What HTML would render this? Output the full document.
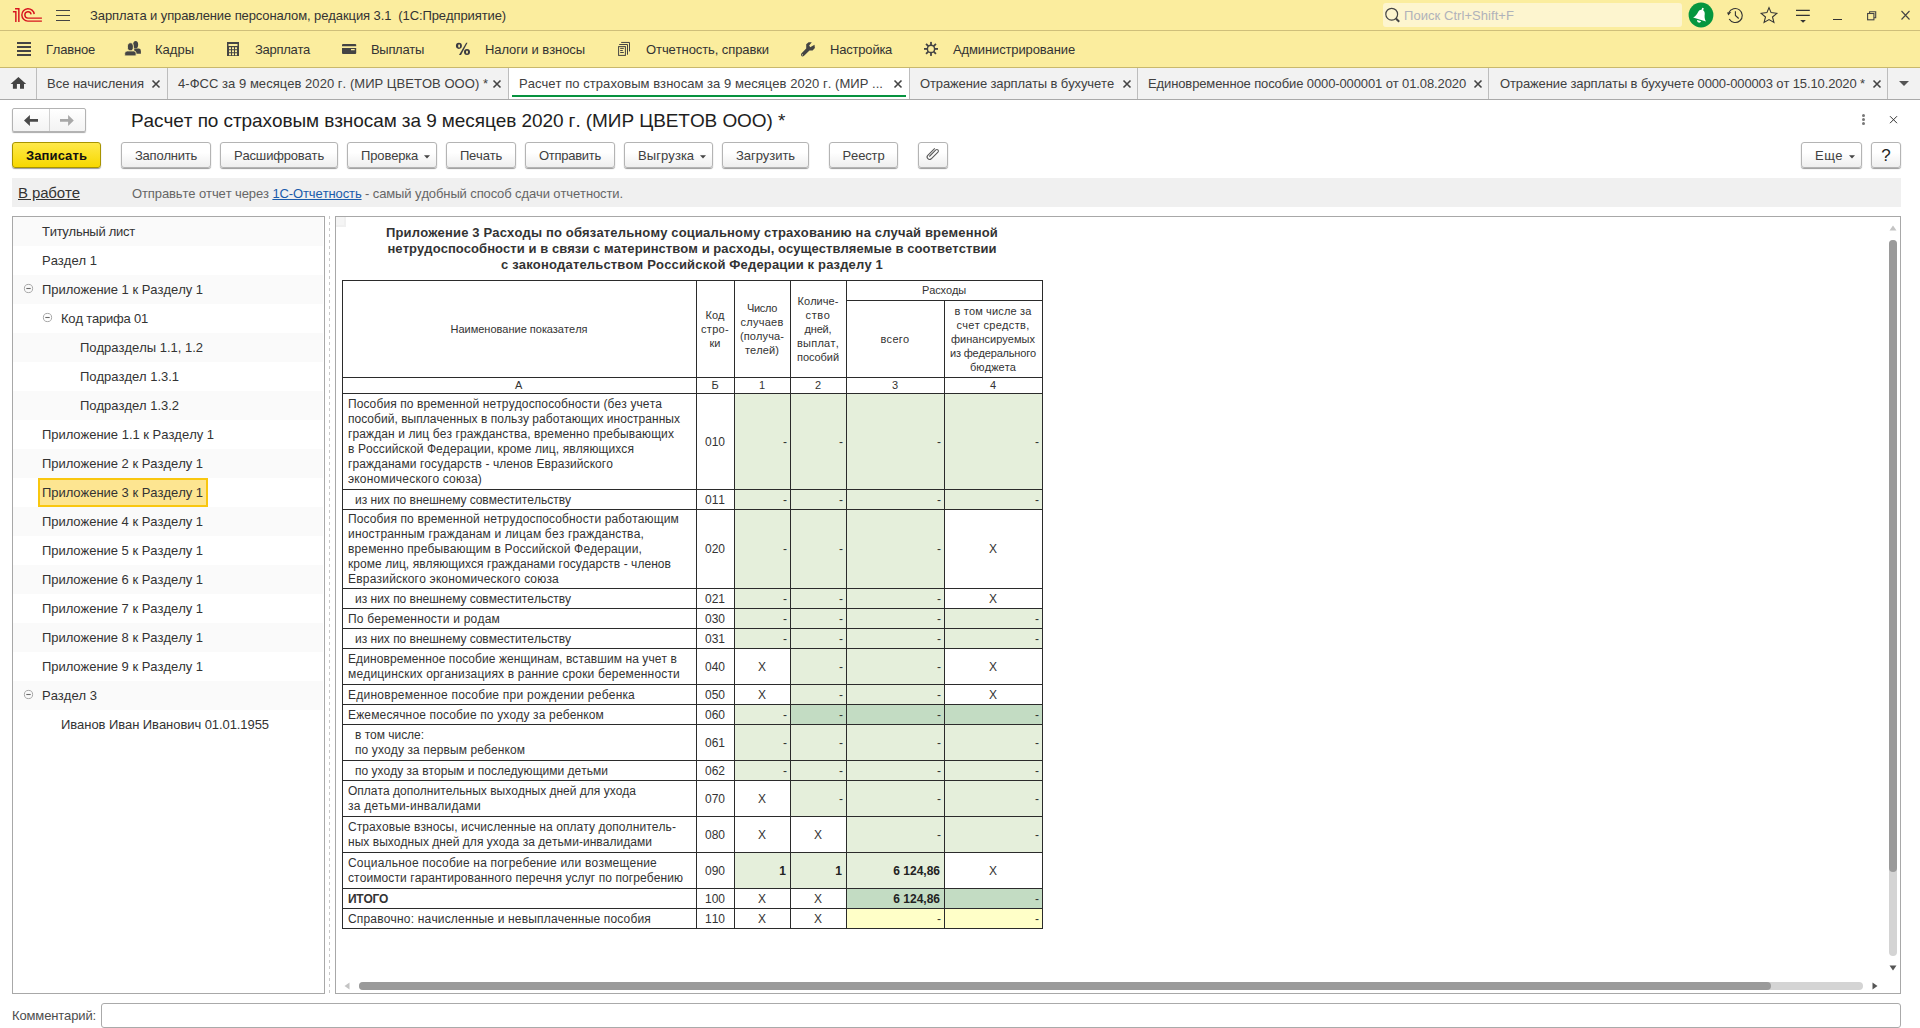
<!DOCTYPE html><html><head><meta charset="utf-8"><title>1C</title><style>
*{margin:0;padding:0;box-sizing:border-box}
html,body{width:1920px;height:1028px;overflow:hidden;background:#fff;font-family:"Liberation Sans",sans-serif;color:#333;font-kerning:none}
.a{position:absolute}
.t{position:absolute;white-space:nowrap;line-height:1}
.btn{position:absolute;height:26px;border:1px solid #b4b4b4;border-radius:3px;background:linear-gradient(#fff 0%,#fff 40%,#eeeeee 100%);box-shadow:0 1px 1px #9a9a9a;font-size:13px;color:#404040;text-align:center;line-height:24px;padding-top:1px;white-space:nowrap}
.tab{position:absolute;top:68px;height:32px;font-size:13px;color:#404040;line-height:32px;white-space:nowrap}
.sec{position:absolute;top:42px;font-size:13px;color:#333;white-space:nowrap;line-height:16px}
.tr{position:absolute;left:13px;width:310px;height:29px;font-size:13px;color:#333;line-height:29px;white-space:nowrap}
.tr.g{background:#fafafa}
.c{position:absolute;overflow:hidden}
.ln{position:absolute;background:#2b2b2b}
</style></head><body>
<div class="a" style="left:0;top:0;width:1920px;height:67px;background:#fbed9e"></div>
<div class="a" style="left:0;top:30px;width:1920px;height:1px;background:#cfbf7a"></div>
<svg class="a" style="left:8px;top:4px" width="40" height="22" viewBox="0 0 40 22" fill="none" stroke="#d7141f" stroke-width="1.45">
<path d="M4.9 7.75 H7.85 V17.9"/><path d="M7.05 4.7 H10.85 V17.9"/>
<path d="M26.2 10.2 A6.2 6.2 0 1 0 19.9 17.1 H33.9"/><path d="M23.1 10.4 A3.15 3.15 0 1 0 19.9 14.1 H33.9"/>
</svg>
<div class="a" style="left:56px;top:10px;width:14px;height:1px;background:#444"></div>
<div class="a" style="left:56px;top:15px;width:14px;height:1px;background:#444"></div>
<div class="a" style="left:56px;top:20px;width:14px;height:1px;background:#444"></div>
<div class="t" style="left:90px;top:9px;font-size:13px;color:#333"><span style="letter-spacing:-0.099px">Зарплата и управление персоналом, редакция 3.1&nbsp; (1С:Предприятие)</span></div>
<div class="a" style="left:1383px;top:3px;width:299px;height:24px;background:#fdf5cf;border-radius:3px"></div>
<svg class="a" style="left:1383px;top:5px" width="20" height="20" viewBox="0 0 20 20" fill="none" stroke="#444" stroke-width="1.2"><circle cx="8.7" cy="9.2" r="5.9"/><path d="M12.9 13.5 L16.2 16.8" stroke-width="2"/></svg>
<div class="t" style="left:1404px;top:9px;font-size:13px;color:#b0b2ba"><span style="letter-spacing:0.056px">Поиск Ctrl+Shift+F</span></div>
<svg class="a" style="left:1688px;top:2px" width="26" height="26" viewBox="0 0 26 26"><circle cx="13" cy="13" r="12.4" fill="#05963f"/>
<g transform="rotate(17 13 13)" fill="#fff"><path d="M6.2 17.7 C8.3 15.8 9 13.2 9.4 11 C9.8 8.9 11 7.8 12.8 7.8 C14.6 7.8 15.9 8.9 16.3 11 C16.7 13.2 17.4 15.8 19.6 17.7 Z"/><rect x="12" y="5.6" width="1.7" height="3"/><path d="M10.8 19 H15 C15 20.2 14 21 12.9 21 C11.8 21 10.8 20.2 10.8 19 Z"/></g></svg>
<svg class="a" style="left:1725px;top:5px" width="20" height="20" viewBox="0 0 20 20" fill="none" stroke="#333" stroke-width="1.1"><path d="M3.9 7.6 A7 7 0 1 1 4.2 14"/><path d="M2 7.6 L6.3 7.1 L3.4 10.4 Z" fill="#333" stroke="none"/><path d="M10.4 6.2 V10.4 L13.7 13.5"/></svg>
<svg class="a" style="left:1759px;top:5px" width="20" height="20" viewBox="0 0 20 20" fill="none" stroke="#333" stroke-width="1.1" stroke-linejoin="miter"><path d="M10 2.6 L12.1 7.6 L17.8 8.3 L13.5 12 L14.9 17.4 L10 14.6 L5.1 17.4 L6.5 12 L2.2 8.3 L7.9 7.6 Z"/></svg>
<svg class="a" style="left:1793px;top:5px" width="20" height="20" viewBox="0 0 20 20" fill="none" stroke="#333" stroke-width="1.2"><path d="M3 5.4 H16.8 M3 10.4 H16.8"/><path d="M7.2 15 H12.9 L10.05 17.8 Z" fill="#333" stroke="none"/></svg>
<div class="a" style="left:1833px;top:19px;width:9px;height:1px;background:#333"></div>
<svg class="a" style="left:1864px;top:8px" width="14" height="14" viewBox="0 0 14 14" fill="none" stroke="#444" stroke-width="1.1"><rect x="3.6" y="5.5" width="6.3" height="6.3"/><path d="M5.6 5.5 V3.7 H11.7 V9.8 H9.9"/></svg>
<svg class="a" style="left:1898px;top:8px" width="14" height="14" viewBox="0 0 14 14" fill="none" stroke="#444" stroke-width="1.1"><path d="M3.5 3 L11.5 11.5 M11.5 3 L3.5 11.5"/></svg>
<svg class="a" style="left:17px;top:42px" width="15" height="14" viewBox="0 0 15 14" fill="#444"><rect x="0" y="0" width="14" height="2"/><rect x="0" y="4" width="14" height="2"/><rect x="0" y="8" width="14" height="2"/><rect x="0" y="12" width="14" height="2"/></svg>
<div class="sec" style="left:46px"><span style="letter-spacing:-0.200px">Главное</span></div>
<svg class="a" style="left:124px;top:40px" width="18" height="18" viewBox="0 0 18 18" fill="#444"><ellipse cx="11.65" cy="4.7" rx="2.5" ry="3.65"/><path d="M10.2 8.6 H14.6 Q16.9 8.6 16.9 10.9 V13.8 H10.2 Z"/><g stroke="#fbed9e" stroke-width="0.9"><ellipse cx="6.4" cy="6.9" rx="3.0" ry="4.15"/><path d="M0.7 15.9 V13.2 Q0.7 10.9 3.2 10.9 H9.6 Q12.1 10.9 12.1 13.2 V15.9 Z"/></g></svg>
<div class="sec" style="left:155px"><span style="letter-spacing:0.008px">Кадры</span></div>
<svg class="a" style="left:227px;top:41px" width="13" height="16" viewBox="0 0 13 16" fill="#444"><path d="M0 1 H12 V15 H0 Z M1.5 3 V5 H10.5 V3 Z M2 6.2 V8.2 H4 V6.2 Z M5 6.2 V8.2 H7 V6.2 Z M8 6.2 V8.2 H10 V6.2 Z M2 9.2 V11.2 H4 V9.2 Z M5 9.2 V11.2 H7 V9.2 Z M8 9.2 V11.2 H10 V9.2 Z M2 12.2 V14.2 H4 V12.2 Z M5 12.2 V14.2 H7 V12.2 Z M8 12.2 V14.2 H10 V12.2 Z" fill-rule="evenodd"/></svg>
<div class="sec" style="left:255px"><span style="letter-spacing:-0.294px">Зарплата</span></div>
<svg class="a" style="left:342px;top:43px" width="15" height="12" viewBox="0 0 15 12" fill="#444"><path d="M0 1.8 Q0 1 1 1 H13.2 Q14.2 1 14.2 1.8 V3.2 H0 Z"/><path d="M0 5 H14.2 V10 Q14.2 10.9 13.2 10.9 H1 Q0 10.9 0 10 Z M9 6 V7.2 H12.7 V6 Z" fill-rule="evenodd"/></svg>
<div class="sec" style="left:371px"><span style="letter-spacing:-0.310px">Выплаты</span></div>
<svg class="a" style="left:454px;top:41px" width="18" height="16" viewBox="0 0 18 16" fill="#3a3a42"><path fill-rule="evenodd" d="M1.90 4.85 A3 3.05 0 1 0 7.90 4.85 A3 3.05 0 1 0 1.90 4.85 Z M4.15 5.00 A0.95 1.75 0 1 0 6.05 5.00 A0.95 1.75 0 1 0 4.15 5.00 Z M10.00 11.00 A3 3 0 1 0 16.00 11.00 A3 3 0 1 0 10.00 11.00 Z M12.00 11.05 A1.0 1.65 0 1 0 14.00 11.05 A1.0 1.65 0 1 0 12.00 11.05 Z"/><path d="M12.2 1.8 L13.5 1.8 L7.0 14.1 L5.0 14.1 Z"/></svg>
<div class="sec" style="left:485px"><span style="letter-spacing:-0.069px">Налоги и взносы</span></div>
<svg class="a" style="left:617px;top:41px" width="14" height="16" viewBox="0 0 14 16" fill="none" stroke="#444" stroke-width="1"><rect x="1.6" y="5.6" width="6.8" height="8.8"/><path d="M2.2 3.5 H10.5 V13.7"/><path d="M4.2 1.45 H12.5 V10.4"/><path d="M3.2 7.4 H6.8 M3.2 9.5 H5.8 M3.2 11.5 H6.8"/></svg>
<div class="sec" style="left:646px"><span style="letter-spacing:-0.091px">Отчетность, справки</span></div>
<svg class="a" style="left:800px;top:41px" width="16" height="16" viewBox="0 0 16 16" fill="#444"><path d="M6.2 3.2 L8.6 1.2 L11.8 1.2 L9.2 4.6 L10.2 6.2 L14.5 3.8 L14.9 7.0 L12.6 9.6 L9.5 9.6 L3.8 15.0 C3.0 15.8 1.6 15.6 1.2 14.6 C0.8 13.6 1.0 12.8 1.6 12.3 L6.2 7.6 Z"/><circle cx="2.4" cy="13.8" r="0.6" fill="#fbed9e"/></svg>
<div class="sec" style="left:830px"><span style="letter-spacing:-0.190px">Настройка</span></div>
<svg class="a" style="left:923px;top:41px" width="16" height="16" viewBox="0 0 16 16"><g fill="#444"><rect x="7.1" y="0.9" width="1.8" height="14"/><rect x="7.1" y="0.9" width="1.8" height="14" transform="rotate(45 8 7.9)"/><rect x="7.1" y="0.9" width="1.8" height="14" transform="rotate(90 8 7.9)"/><rect x="7.1" y="0.9" width="1.8" height="14" transform="rotate(135 8 7.9)"/></g><circle cx="8" cy="7.9" r="4.3" fill="#444"/><circle cx="8" cy="7.9" r="2.9" fill="#fbed9e"/></svg>
<div class="sec" style="left:953px"><span style="letter-spacing:-0.124px">Администрирование</span></div>
<div class="a" style="left:0;top:67px;width:1920px;height:33px;background:#f2f2f2"></div>
<div class="a" style="left:0;top:67px;width:1920px;height:1px;background:#c9b86c"></div>
<div class="a" style="left:0;top:99px;width:1920px;height:1px;background:#a9a9a9"></div>
<div class="a" style="left:509px;top:68px;width:400px;height:31px;background:#fff"></div>
<div class="a" style="left:512px;top:95px;width:394px;height:2px;background:#07923f"></div>
<div class="a" style="left:36px;top:68px;width:1px;height:31px;background:#bdbdbd"></div>
<div class="a" style="left:167px;top:68px;width:1px;height:31px;background:#bdbdbd"></div>
<div class="a" style="left:508px;top:68px;width:1px;height:31px;background:#bdbdbd"></div>
<div class="a" style="left:909px;top:68px;width:1px;height:31px;background:#bdbdbd"></div>
<div class="a" style="left:1137px;top:68px;width:1px;height:31px;background:#bdbdbd"></div>
<div class="a" style="left:1488px;top:68px;width:1px;height:31px;background:#bdbdbd"></div>
<div class="a" style="left:1887px;top:68px;width:1px;height:31px;background:#bdbdbd"></div>
<svg class="a" style="left:10px;top:76px" width="17" height="14" viewBox="0 0 17 14" fill="#444"><path d="M8.4 0.9 L16.2 7.9 H14 V12.8 H10 V7.9 H6.9 V12.8 H2.9 V7.9 H0.6 Z"/></svg>
<div class="tab" style="left:47px"><span style="letter-spacing:-0.018px">Все начисления</span></div>
<svg class="a" style="left:151px;top:79px" width="10" height="10" viewBox="0 0 10 10" stroke="#444" stroke-width="1.6"><path d="M1.5 1.5 L8.5 8.5 M8.5 1.5 L1.5 8.5"/></svg>
<div class="tab" style="left:178px"><span style="letter-spacing:0.038px">4-ФСС за 9 месяцев 2020 г. (МИР ЦВЕТОВ ООО) *</span></div>
<svg class="a" style="left:492px;top:79px" width="10" height="10" viewBox="0 0 10 10" stroke="#444" stroke-width="1.6"><path d="M1.5 1.5 L8.5 8.5 M8.5 1.5 L1.5 8.5"/></svg>
<div class="tab" style="left:519px"><span style="letter-spacing:0.044px">Расчет по страховым взносам за 9 месяцев 2020 г. (МИР ...</span></div>
<svg class="a" style="left:893px;top:79px" width="10" height="10" viewBox="0 0 10 10" stroke="#444" stroke-width="1.6"><path d="M1.5 1.5 L8.5 8.5 M8.5 1.5 L1.5 8.5"/></svg>
<div class="tab" style="left:920px"><span style="letter-spacing:-0.123px">Отражение зарплаты в бухучете</span></div>
<svg class="a" style="left:1122px;top:79px" width="10" height="10" viewBox="0 0 10 10" stroke="#444" stroke-width="1.6"><path d="M1.5 1.5 L8.5 8.5 M8.5 1.5 L1.5 8.5"/></svg>
<div class="tab" style="left:1148px"><span style="letter-spacing:-0.115px">Единовременное пособие 0000-000001 от 01.08.2020</span></div>
<svg class="a" style="left:1473px;top:79px" width="10" height="10" viewBox="0 0 10 10" stroke="#444" stroke-width="1.6"><path d="M1.5 1.5 L8.5 8.5 M8.5 1.5 L1.5 8.5"/></svg>
<div class="tab" style="left:1500px"><span style="letter-spacing:-0.122px">Отражение зарплаты в бухучете 0000-000003 от 15.10.2020 *</span></div>
<svg class="a" style="left:1872px;top:79px" width="10" height="10" viewBox="0 0 10 10" stroke="#444" stroke-width="1.6"><path d="M1.5 1.5 L8.5 8.5 M8.5 1.5 L1.5 8.5"/></svg>
<svg class="a" style="left:1898px;top:80px" width="12" height="8" viewBox="0 0 12 8" fill="#555"><path d="M1 1 H11 L6 6 Z"/></svg>
<div class="a" style="left:12px;top:108px;width:74px;height:24px;border:1px solid #b3b3b3;border-radius:2px;background:linear-gradient(#fff,#f3f3f3);box-shadow:0 1px 1px #aaa"></div>
<div class="a" style="left:49px;top:109px;width:1px;height:22px;background:#d0d0d0"></div>
<svg class="a" style="left:23px;top:114px" width="16" height="12" viewBox="0 0 16 12" fill="#4a4a4a"><path d="M1 6.4 L6.9 0.9 V5.1 H15 V7.7 H6.9 V11.9 Z"/></svg>
<svg class="a" style="left:59px;top:114px" width="16" height="12" viewBox="0 0 16 12" fill="#a8a8a8"><path d="M14.8 6.4 L9.1 0.9 V5.1 H1 V7.7 H9.1 V11.9 Z"/></svg>
<div class="t" style="left:131px;top:111px;font-size:19px;color:#1e1e1e;letter-spacing:-0.08px">Расчет по страховым взносам за 9 месяцев 2020 г. (МИР ЦВЕТОВ ООО) *</div>
<div class="a" style="left:1862px;top:114px;width:3px;height:3px;border-radius:2px;background:#777"></div>
<div class="a" style="left:1862px;top:118px;width:3px;height:3px;border-radius:2px;background:#777"></div>
<div class="a" style="left:1862px;top:122px;width:3px;height:3px;border-radius:2px;background:#777"></div>
<svg class="a" style="left:1888px;top:115px" width="10" height="10" viewBox="0 0 10 10" stroke="#333" stroke-width="1"><path d="M2 1.2 L9 8.2 M9 1.2 L2 8.2"/></svg>
<div class="a" style="left:12px;top:142px;width:89px;height:26px;border:1px solid #a89400;border-radius:3px;background:linear-gradient(#ffe94a,#f7d800);box-shadow:0 1px 1px #9a9a9a;font-size:13px;font-weight:bold;color:#111;text-align:center;line-height:24px;padding-top:1px"><span style="letter-spacing:0.120px">Записать</span></div>
<div class="btn" style="left:121px;top:142px;width:90px"><span style="letter-spacing:-0.234px">Заполнить</span></div>
<div class="btn" style="left:220px;top:142px;width:118px"><span style="letter-spacing:-0.176px">Расшифровать</span></div>
<div class="btn" style="left:347px;top:142px;width:90px;text-align:left;padding-left:13px"><span style="letter-spacing:-0.136px">Проверка</span></div>
<svg class="a" style="left:424px;top:155px" width="6" height="4" viewBox="0 0 6 4" fill="#444"><path d="M0 0.2 H6 L3 3.5 Z"/></svg>
<div class="btn" style="left:446px;top:142px;width:70px"><span style="letter-spacing:-0.217px">Печать</span></div>
<div class="btn" style="left:525px;top:142px;width:90px"><span style="letter-spacing:-0.273px">Отправить</span></div>
<div class="btn" style="left:624px;top:142px;width:89px;text-align:left;padding-left:13px"><span style="letter-spacing:0.079px">Выгрузка</span></div>
<svg class="a" style="left:700px;top:155px" width="6" height="4" viewBox="0 0 6 4" fill="#444"><path d="M0 0.2 H6 L3 3.5 Z"/></svg>
<div class="btn" style="left:722px;top:142px;width:87px"><span style="letter-spacing:-0.056px">Загрузить</span></div>
<div class="btn" style="left:829px;top:142px;width:69px"><span style="letter-spacing:-0.136px">Реестр</span></div>
<div class="btn" style="left:1801px;top:142px;width:61px;text-align:left;padding-left:13px"><span style="letter-spacing:0.468px">Еще</span></div>
<svg class="a" style="left:1849px;top:155px" width="6" height="4" viewBox="0 0 6 4" fill="#444"><path d="M0 0.2 H6 L3 3.5 Z"/></svg>
<div class="btn" style="left:918px;top:142px;width:30px"></div>
<svg class="a" style="left:924px;top:147px" width="17" height="17" viewBox="0 0 17 17" fill="none" stroke="#5a5a5a" stroke-width="1.1"><path d="M10.8 1.3 L3.77 8.32 A2.45 2.45 0 0 0 7.23 11.78 L13.96 5.06 A1.5 1.5 0 0 0 11.84 2.94 L5.3 9.5"/></svg>
<div class="btn" style="left:1871px;top:142px;width:30px;font-size:17px;color:#222">?</div>
<div class="a" style="left:12px;top:178px;width:1889px;height:29px;background:#f0f0f0"></div>
<div class="t" style="left:18px;top:185px;font-size:15px;color:#333;text-decoration:underline"><span style="letter-spacing:-0.125px">В работе</span></div>
<div class="t" style="left:132px;top:187px;font-size:13px;color:#666;letter-spacing:-0.111px">Отправьте отчет через <span style="color:#1a5bab;text-decoration:underline">1С-Отчетность</span> - самый удобный способ сдачи отчетности.</div>
<div class="a" style="left:12px;top:216px;width:313px;height:778px;border:1px solid #a8a8a8"></div>
<div class="tr g" style="top:217px"></div>
<div class="t" style="left:42px;top:225px;font-size:13px;color:#333"><span style="letter-spacing:-0.265px">Титульный лист</span></div>
<div class="tr" style="top:246px"></div>
<div class="t" style="left:42px;top:254px;font-size:13px;color:#333"><span style="letter-spacing:-0.013px">Раздел 1</span></div>
<div class="tr g" style="top:275px"></div>
<div class="t" style="left:42px;top:283px;font-size:13px;color:#333"><span style="letter-spacing:-0.025px">Приложение 1 к Разделу 1</span></div>
<svg class="a" style="left:23px;top:283px" width="11" height="11" viewBox="0 0 11 11" fill="none" stroke="#a6a6a6" stroke-width="1"><circle cx="5.5" cy="5.5" r="4.1"/><path d="M3.3 5.5 H7.7" stroke="#6a6a6a" stroke-width="1.1"/></svg>
<div class="tr" style="top:304px"></div>
<div class="t" style="left:61px;top:312px;font-size:13px;color:#333"><span style="letter-spacing:-0.206px">Код тарифа 01</span></div>
<svg class="a" style="left:42px;top:312px" width="11" height="11" viewBox="0 0 11 11" fill="none" stroke="#a6a6a6" stroke-width="1"><circle cx="5.5" cy="5.5" r="4.1"/><path d="M3.3 5.5 H7.7" stroke="#6a6a6a" stroke-width="1.1"/></svg>
<div class="tr g" style="top:333px"></div>
<div class="t" style="left:80px;top:341px;font-size:13px;color:#333"><span style="letter-spacing:-0.016px">Подразделы 1.1, 1.2</span></div>
<div class="tr" style="top:362px"></div>
<div class="t" style="left:80px;top:370px;font-size:13px;color:#333"><span style="letter-spacing:-0.034px">Подраздел 1.3.1</span></div>
<div class="tr g" style="top:391px"></div>
<div class="t" style="left:80px;top:399px;font-size:13px;color:#333"><span style="letter-spacing:-0.034px">Подраздел 1.3.2</span></div>
<div class="tr" style="top:420px"></div>
<div class="t" style="left:42px;top:428px;font-size:13px;color:#333"><span style="letter-spacing:-0.017px">Приложение 1.1 к Разделу 1</span></div>
<div class="tr g" style="top:449px"></div>
<div class="t" style="left:42px;top:457px;font-size:13px;color:#333"><span style="letter-spacing:-0.025px">Приложение 2 к Разделу 1</span></div>
<div class="tr" style="top:478px"></div>
<div class="a" style="left:38px;top:478px;width:170px;height:29px;background:#fde591;border:2px solid #f9c70f"></div>
<div class="t" style="left:42px;top:486px;font-size:13px;color:#333"><span style="letter-spacing:-0.025px">Приложение 3 к Разделу 1</span></div>
<div class="tr g" style="top:507px"></div>
<div class="t" style="left:42px;top:515px;font-size:13px;color:#333"><span style="letter-spacing:-0.025px">Приложение 4 к Разделу 1</span></div>
<div class="tr" style="top:536px"></div>
<div class="t" style="left:42px;top:544px;font-size:13px;color:#333"><span style="letter-spacing:-0.025px">Приложение 5 к Разделу 1</span></div>
<div class="tr g" style="top:565px"></div>
<div class="t" style="left:42px;top:573px;font-size:13px;color:#333"><span style="letter-spacing:-0.025px">Приложение 6 к Разделу 1</span></div>
<div class="tr" style="top:594px"></div>
<div class="t" style="left:42px;top:602px;font-size:13px;color:#333"><span style="letter-spacing:-0.025px">Приложение 7 к Разделу 1</span></div>
<div class="tr g" style="top:623px"></div>
<div class="t" style="left:42px;top:631px;font-size:13px;color:#333"><span style="letter-spacing:-0.025px">Приложение 8 к Разделу 1</span></div>
<div class="tr" style="top:652px"></div>
<div class="t" style="left:42px;top:660px;font-size:13px;color:#333"><span style="letter-spacing:-0.025px">Приложение 9 к Разделу 1</span></div>
<div class="tr g" style="top:681px"></div>
<div class="t" style="left:42px;top:689px;font-size:13px;color:#333"><span style="letter-spacing:-0.013px">Раздел 3</span></div>
<svg class="a" style="left:23px;top:689px" width="11" height="11" viewBox="0 0 11 11" fill="none" stroke="#a6a6a6" stroke-width="1"><circle cx="5.5" cy="5.5" r="4.1"/><path d="M3.3 5.5 H7.7" stroke="#6a6a6a" stroke-width="1.1"/></svg>
<div class="tr" style="top:710px"></div>
<div class="t" style="left:61px;top:718px;font-size:13px;color:#333"><span style="letter-spacing:-0.070px">Иванов Иван Иванович 01.01.1955</span></div>
<div class="a" style="left:329px;top:216px;width:1px;height:778px;background:repeating-linear-gradient(#c8c8c8 0 3px,transparent 3px 6px)"></div>
<div class="a" style="left:335px;top:216px;width:1566px;height:778px;border:1px solid #a8a8a8"></div>
<div class="a" style="left:336px;top:217px;width:10px;height:10px;background:#f5f5f5;border-right:2px solid #f0f0f0;border-bottom:2px solid #f0f0f0"></div>
<svg class="a" style="left:1889px;top:225px" width="8" height="6" viewBox="0 0 8 6" fill="#c4c4c4"><path d="M0.5 5.5 L4 0.5 L7.5 5.5 Z"/></svg>
<div class="a" style="left:1889px;top:240px;width:8px;height:716px;border-radius:4px;background:#d4d4d4"></div>
<div class="a" style="left:1889px;top:240px;width:8px;height:632px;border-radius:4px;background:#9a9a9a"></div>
<svg class="a" style="left:1889px;top:965px" width="8" height="6" viewBox="0 0 8 6" fill="#555"><path d="M0.5 0.5 L7.5 0.5 L4 5.5 Z"/></svg>
<svg class="a" style="left:344px;top:982px" width="6" height="8" viewBox="0 0 6 8" fill="#c4c4c4"><path d="M5.5 0.5 V7.5 L0.5 4 Z"/></svg>
<div class="a" style="left:359px;top:982px;width:1504px;height:8px;border-radius:4px;background:#d4d4d4"></div>
<div class="a" style="left:359px;top:982px;width:1412px;height:8px;border-radius:4px;background:#9a9a9a"></div>
<svg class="a" style="left:1872px;top:982px" width="6" height="8" viewBox="0 0 6 8" fill="#555"><path d="M0.5 0.5 V7.5 L5.5 4 Z"/></svg>
<div class="t" style="left:12px;top:1009px;font-size:13px;color:#4d4d4d"><span style="letter-spacing:-0.136px">Комментарий:</span></div>
<div class="a" style="left:101px;top:1003px;width:1800px;height:25px;border:1px solid #aaa;border-radius:3px;background:#fff"></div>
<div class="a" style="left:342px;top:225px;width:700px;text-align:center;font-size:13px;font-weight:bold;color:#333;line-height:16px;white-space:nowrap"><span style="letter-spacing:0.154px">Приложение 3 Расходы по обязательному социальному страхованию на случай временной</span><br><span style="letter-spacing:0.051px">нетрудоспособности и в связи с материнством и расходы, осуществляемые в соответствии</span><br><span style="letter-spacing:0.167px">с законодательством Российской Федерации к разделу 1</span></div>
<div class="a" style="left:348px;top:397.0px;font-size:12px;line-height:15px;color:#333;white-space:nowrap"><span style="letter-spacing:0.107px">Пособия по временной нетрудоспособности (без учета</span><br><span style="letter-spacing:0.043px">пособий, выплаченных в пользу работающих иностранных</span><br><span style="letter-spacing:0.101px">граждан и лиц без гражданства, временно пребывающих</span><br><span style="letter-spacing:0.087px">в Российской Федерации, кроме лиц, являющихся</span><br><span style="letter-spacing:0.081px">гражданами государств - членов Евразийского</span><br><span style="letter-spacing:0.220px">экономического союза)</span></div>
<div class="a" style="left:696px;top:434.5px;width:38px;text-align:center;font-size:12px;line-height:15px;color:#333">010</div>
<div class="a" style="left:734px;top:393px;width:56px;height:96px;background:#e5efdb"></div>
<div class="a" style="left:734px;top:434.5px;width:53px;text-align:right;font-size:12px;line-height:15px;color:#333">-</div>
<div class="a" style="left:790px;top:393px;width:56px;height:96px;background:#e5efdb"></div>
<div class="a" style="left:790px;top:434.5px;width:53px;text-align:right;font-size:12px;line-height:15px;color:#333">-</div>
<div class="a" style="left:846px;top:393px;width:98px;height:96px;background:#e5efdb"></div>
<div class="a" style="left:846px;top:434.5px;width:95px;text-align:right;font-size:12px;line-height:15px;color:#333">-</div>
<div class="a" style="left:944px;top:393px;width:98px;height:96px;background:#e5efdb"></div>
<div class="a" style="left:944px;top:434.5px;width:95px;text-align:right;font-size:12px;line-height:15px;color:#333">-</div>
<div class="a" style="left:355px;top:492.5px;font-size:12px;line-height:15px;color:#333;white-space:nowrap"><span style="letter-spacing:-0.010px">из них по внешнему совместительству</span></div>
<div class="a" style="left:696px;top:492.5px;width:38px;text-align:center;font-size:12px;line-height:15px;color:#333">011</div>
<div class="a" style="left:734px;top:489px;width:56px;height:20px;background:#e5efdb"></div>
<div class="a" style="left:734px;top:492.5px;width:53px;text-align:right;font-size:12px;line-height:15px;color:#333">-</div>
<div class="a" style="left:790px;top:489px;width:56px;height:20px;background:#e5efdb"></div>
<div class="a" style="left:790px;top:492.5px;width:53px;text-align:right;font-size:12px;line-height:15px;color:#333">-</div>
<div class="a" style="left:846px;top:489px;width:98px;height:20px;background:#e5efdb"></div>
<div class="a" style="left:846px;top:492.5px;width:95px;text-align:right;font-size:12px;line-height:15px;color:#333">-</div>
<div class="a" style="left:944px;top:489px;width:98px;height:20px;background:#e5efdb"></div>
<div class="a" style="left:944px;top:492.5px;width:95px;text-align:right;font-size:12px;line-height:15px;color:#333">-</div>
<div class="a" style="left:348px;top:512.0px;font-size:12px;line-height:15px;color:#333;white-space:nowrap"><span style="letter-spacing:0.138px">Пособия по временной нетрудоспособности работающим</span><br><span style="letter-spacing:0.178px">иностранным гражданам и лицам без гражданства,</span><br><span style="letter-spacing:0.144px">временно пребывающим в Российской Федерации,</span><br><span style="letter-spacing:0.049px">кроме лиц, являющихся гражданами государств - членов</span><br><span style="letter-spacing:0.202px">Евразийского экономического союза</span></div>
<div class="a" style="left:696px;top:542.0px;width:38px;text-align:center;font-size:12px;line-height:15px;color:#333">020</div>
<div class="a" style="left:734px;top:509px;width:56px;height:79px;background:#e5efdb"></div>
<div class="a" style="left:734px;top:542.0px;width:53px;text-align:right;font-size:12px;line-height:15px;color:#333">-</div>
<div class="a" style="left:790px;top:509px;width:56px;height:79px;background:#e5efdb"></div>
<div class="a" style="left:790px;top:542.0px;width:53px;text-align:right;font-size:12px;line-height:15px;color:#333">-</div>
<div class="a" style="left:846px;top:509px;width:98px;height:79px;background:#e5efdb"></div>
<div class="a" style="left:846px;top:542.0px;width:95px;text-align:right;font-size:12px;line-height:15px;color:#333">-</div>
<div class="a" style="left:944px;top:542.0px;width:98px;text-align:center;font-size:12px;line-height:15px;color:#333">X</div>
<div class="a" style="left:355px;top:591.5px;font-size:12px;line-height:15px;color:#333;white-space:nowrap"><span style="letter-spacing:-0.010px">из них по внешнему совместительству</span></div>
<div class="a" style="left:696px;top:591.5px;width:38px;text-align:center;font-size:12px;line-height:15px;color:#333">021</div>
<div class="a" style="left:734px;top:588px;width:56px;height:20px;background:#e5efdb"></div>
<div class="a" style="left:734px;top:591.5px;width:53px;text-align:right;font-size:12px;line-height:15px;color:#333">-</div>
<div class="a" style="left:790px;top:588px;width:56px;height:20px;background:#e5efdb"></div>
<div class="a" style="left:790px;top:591.5px;width:53px;text-align:right;font-size:12px;line-height:15px;color:#333">-</div>
<div class="a" style="left:846px;top:588px;width:98px;height:20px;background:#e5efdb"></div>
<div class="a" style="left:846px;top:591.5px;width:95px;text-align:right;font-size:12px;line-height:15px;color:#333">-</div>
<div class="a" style="left:944px;top:591.5px;width:98px;text-align:center;font-size:12px;line-height:15px;color:#333">X</div>
<div class="a" style="left:348px;top:611.5px;font-size:12px;line-height:15px;color:#333;white-space:nowrap"><span style="letter-spacing:0.208px">По беременности и родам</span></div>
<div class="a" style="left:696px;top:611.5px;width:38px;text-align:center;font-size:12px;line-height:15px;color:#333">030</div>
<div class="a" style="left:734px;top:608px;width:56px;height:20px;background:#e5efdb"></div>
<div class="a" style="left:734px;top:611.5px;width:53px;text-align:right;font-size:12px;line-height:15px;color:#333">-</div>
<div class="a" style="left:790px;top:608px;width:56px;height:20px;background:#e5efdb"></div>
<div class="a" style="left:790px;top:611.5px;width:53px;text-align:right;font-size:12px;line-height:15px;color:#333">-</div>
<div class="a" style="left:846px;top:608px;width:98px;height:20px;background:#e5efdb"></div>
<div class="a" style="left:846px;top:611.5px;width:95px;text-align:right;font-size:12px;line-height:15px;color:#333">-</div>
<div class="a" style="left:944px;top:608px;width:98px;height:20px;background:#e5efdb"></div>
<div class="a" style="left:944px;top:611.5px;width:95px;text-align:right;font-size:12px;line-height:15px;color:#333">-</div>
<div class="a" style="left:355px;top:631.5px;font-size:12px;line-height:15px;color:#333;white-space:nowrap"><span style="letter-spacing:-0.010px">из них по внешнему совместительству</span></div>
<div class="a" style="left:696px;top:631.5px;width:38px;text-align:center;font-size:12px;line-height:15px;color:#333">031</div>
<div class="a" style="left:734px;top:628px;width:56px;height:20px;background:#e5efdb"></div>
<div class="a" style="left:734px;top:631.5px;width:53px;text-align:right;font-size:12px;line-height:15px;color:#333">-</div>
<div class="a" style="left:790px;top:628px;width:56px;height:20px;background:#e5efdb"></div>
<div class="a" style="left:790px;top:631.5px;width:53px;text-align:right;font-size:12px;line-height:15px;color:#333">-</div>
<div class="a" style="left:846px;top:628px;width:98px;height:20px;background:#e5efdb"></div>
<div class="a" style="left:846px;top:631.5px;width:95px;text-align:right;font-size:12px;line-height:15px;color:#333">-</div>
<div class="a" style="left:944px;top:628px;width:98px;height:20px;background:#e5efdb"></div>
<div class="a" style="left:944px;top:631.5px;width:95px;text-align:right;font-size:12px;line-height:15px;color:#333">-</div>
<div class="a" style="left:348px;top:652.0px;font-size:12px;line-height:15px;color:#333;white-space:nowrap"><span style="letter-spacing:0.083px">Единовременное пособие женщинам, вставшим на учет в</span><br><span style="letter-spacing:0.172px">медицинских организациях в ранние сроки беременности</span></div>
<div class="a" style="left:696px;top:659.5px;width:38px;text-align:center;font-size:12px;line-height:15px;color:#333">040</div>
<div class="a" style="left:734px;top:659.5px;width:56px;text-align:center;font-size:12px;line-height:15px;color:#333">X</div>
<div class="a" style="left:790px;top:648px;width:56px;height:36px;background:#e5efdb"></div>
<div class="a" style="left:790px;top:659.5px;width:53px;text-align:right;font-size:12px;line-height:15px;color:#333">-</div>
<div class="a" style="left:846px;top:648px;width:98px;height:36px;background:#e5efdb"></div>
<div class="a" style="left:846px;top:659.5px;width:95px;text-align:right;font-size:12px;line-height:15px;color:#333">-</div>
<div class="a" style="left:944px;top:659.5px;width:98px;text-align:center;font-size:12px;line-height:15px;color:#333">X</div>
<div class="a" style="left:348px;top:687.5px;font-size:12px;line-height:15px;color:#333;white-space:nowrap"><span style="letter-spacing:0.254px">Единовременное пособие при рождении ребенка</span></div>
<div class="a" style="left:696px;top:687.5px;width:38px;text-align:center;font-size:12px;line-height:15px;color:#333">050</div>
<div class="a" style="left:734px;top:687.5px;width:56px;text-align:center;font-size:12px;line-height:15px;color:#333">X</div>
<div class="a" style="left:790px;top:684px;width:56px;height:20px;background:#e5efdb"></div>
<div class="a" style="left:790px;top:687.5px;width:53px;text-align:right;font-size:12px;line-height:15px;color:#333">-</div>
<div class="a" style="left:846px;top:684px;width:98px;height:20px;background:#e5efdb"></div>
<div class="a" style="left:846px;top:687.5px;width:95px;text-align:right;font-size:12px;line-height:15px;color:#333">-</div>
<div class="a" style="left:944px;top:687.5px;width:98px;text-align:center;font-size:12px;line-height:15px;color:#333">X</div>
<div class="a" style="left:348px;top:707.5px;font-size:12px;line-height:15px;color:#333;white-space:nowrap"><span style="letter-spacing:0.154px">Ежемесячное пособие по уходу за ребенком</span></div>
<div class="a" style="left:696px;top:707.5px;width:38px;text-align:center;font-size:12px;line-height:15px;color:#333">060</div>
<div class="a" style="left:734px;top:704px;width:56px;height:20px;background:#e5efdb"></div>
<div class="a" style="left:734px;top:707.5px;width:53px;text-align:right;font-size:12px;line-height:15px;color:#333">-</div>
<div class="a" style="left:790px;top:704px;width:56px;height:20px;background:#c3dcc3"></div>
<div class="a" style="left:790px;top:707.5px;width:53px;text-align:right;font-size:12px;line-height:15px;color:#333">-</div>
<div class="a" style="left:846px;top:704px;width:98px;height:20px;background:#c3dcc3"></div>
<div class="a" style="left:846px;top:707.5px;width:95px;text-align:right;font-size:12px;line-height:15px;color:#333">-</div>
<div class="a" style="left:944px;top:704px;width:98px;height:20px;background:#c3dcc3"></div>
<div class="a" style="left:944px;top:707.5px;width:95px;text-align:right;font-size:12px;line-height:15px;color:#333">-</div>
<div class="a" style="left:355px;top:728.0px;font-size:12px;line-height:15px;color:#333;white-space:nowrap"><span style="letter-spacing:-0.036px">в том числе:</span><br><span style="letter-spacing:0.106px">по уходу за первым ребенком</span></div>
<div class="a" style="left:696px;top:735.5px;width:38px;text-align:center;font-size:12px;line-height:15px;color:#333">061</div>
<div class="a" style="left:734px;top:724px;width:56px;height:36px;background:#e5efdb"></div>
<div class="a" style="left:734px;top:735.5px;width:53px;text-align:right;font-size:12px;line-height:15px;color:#333">-</div>
<div class="a" style="left:790px;top:724px;width:56px;height:36px;background:#e5efdb"></div>
<div class="a" style="left:790px;top:735.5px;width:53px;text-align:right;font-size:12px;line-height:15px;color:#333">-</div>
<div class="a" style="left:846px;top:724px;width:98px;height:36px;background:#e5efdb"></div>
<div class="a" style="left:846px;top:735.5px;width:95px;text-align:right;font-size:12px;line-height:15px;color:#333">-</div>
<div class="a" style="left:944px;top:724px;width:98px;height:36px;background:#e5efdb"></div>
<div class="a" style="left:944px;top:735.5px;width:95px;text-align:right;font-size:12px;line-height:15px;color:#333">-</div>
<div class="a" style="left:355px;top:763.5px;font-size:12px;line-height:15px;color:#333;white-space:nowrap"><span style="letter-spacing:0.010px">по уходу за вторым и последующими детьми</span></div>
<div class="a" style="left:696px;top:763.5px;width:38px;text-align:center;font-size:12px;line-height:15px;color:#333">062</div>
<div class="a" style="left:734px;top:760px;width:56px;height:20px;background:#e5efdb"></div>
<div class="a" style="left:734px;top:763.5px;width:53px;text-align:right;font-size:12px;line-height:15px;color:#333">-</div>
<div class="a" style="left:790px;top:760px;width:56px;height:20px;background:#e5efdb"></div>
<div class="a" style="left:790px;top:763.5px;width:53px;text-align:right;font-size:12px;line-height:15px;color:#333">-</div>
<div class="a" style="left:846px;top:760px;width:98px;height:20px;background:#e5efdb"></div>
<div class="a" style="left:846px;top:763.5px;width:95px;text-align:right;font-size:12px;line-height:15px;color:#333">-</div>
<div class="a" style="left:944px;top:760px;width:98px;height:20px;background:#e5efdb"></div>
<div class="a" style="left:944px;top:763.5px;width:95px;text-align:right;font-size:12px;line-height:15px;color:#333">-</div>
<div class="a" style="left:348px;top:784.0px;font-size:12px;line-height:15px;color:#333;white-space:nowrap"><span style="letter-spacing:0.000px">Оплата дополнительных выходных дней для ухода</span><br><span style="letter-spacing:0.220px">за детьми-инвалидами</span></div>
<div class="a" style="left:696px;top:791.5px;width:38px;text-align:center;font-size:12px;line-height:15px;color:#333">070</div>
<div class="a" style="left:734px;top:791.5px;width:56px;text-align:center;font-size:12px;line-height:15px;color:#333">X</div>
<div class="a" style="left:790px;top:780px;width:56px;height:36px;background:#e5efdb"></div>
<div class="a" style="left:790px;top:791.5px;width:53px;text-align:right;font-size:12px;line-height:15px;color:#333">-</div>
<div class="a" style="left:846px;top:780px;width:98px;height:36px;background:#e5efdb"></div>
<div class="a" style="left:846px;top:791.5px;width:95px;text-align:right;font-size:12px;line-height:15px;color:#333">-</div>
<div class="a" style="left:944px;top:780px;width:98px;height:36px;background:#e5efdb"></div>
<div class="a" style="left:944px;top:791.5px;width:95px;text-align:right;font-size:12px;line-height:15px;color:#333">-</div>
<div class="a" style="left:348px;top:820.0px;font-size:12px;line-height:15px;color:#333;white-space:nowrap"><span style="letter-spacing:0.081px">Страховые взносы, исчисленные на оплату дополнитель-</span><br><span style="letter-spacing:0.035px">ных выходных дней для ухода за детьми-инвалидами</span></div>
<div class="a" style="left:696px;top:827.5px;width:38px;text-align:center;font-size:12px;line-height:15px;color:#333">080</div>
<div class="a" style="left:734px;top:827.5px;width:56px;text-align:center;font-size:12px;line-height:15px;color:#333">X</div>
<div class="a" style="left:790px;top:827.5px;width:56px;text-align:center;font-size:12px;line-height:15px;color:#333">X</div>
<div class="a" style="left:846px;top:816px;width:98px;height:36px;background:#e5efdb"></div>
<div class="a" style="left:846px;top:827.5px;width:95px;text-align:right;font-size:12px;line-height:15px;color:#333">-</div>
<div class="a" style="left:944px;top:816px;width:98px;height:36px;background:#e5efdb"></div>
<div class="a" style="left:944px;top:827.5px;width:95px;text-align:right;font-size:12px;line-height:15px;color:#333">-</div>
<div class="a" style="left:348px;top:856.0px;font-size:12px;line-height:15px;color:#333;white-space:nowrap"><span style="letter-spacing:0.196px">Социальное пособие на погребение или возмещение</span><br><span style="letter-spacing:0.084px">стоимости гарантированного перечня услуг по погребению</span></div>
<div class="a" style="left:696px;top:863.5px;width:38px;text-align:center;font-size:12px;line-height:15px;color:#333">090</div>
<div class="a" style="left:734px;top:852px;width:56px;height:36px;background:#e5efdb"></div>
<div class="a" style="left:734px;top:863.5px;width:52px;text-align:right;font-size:12px;font-weight:bold;line-height:15px;color:#222">1</div>
<div class="a" style="left:790px;top:852px;width:56px;height:36px;background:#e5efdb"></div>
<div class="a" style="left:790px;top:863.5px;width:52px;text-align:right;font-size:12px;font-weight:bold;line-height:15px;color:#222">1</div>
<div class="a" style="left:846px;top:852px;width:98px;height:36px;background:#e5efdb"></div>
<div class="a" style="left:846px;top:863.5px;width:94px;text-align:right;font-size:12px;font-weight:bold;line-height:15px;color:#222">6 124,86</div>
<div class="a" style="left:944px;top:863.5px;width:98px;text-align:center;font-size:12px;line-height:15px;color:#333">X</div>
<div class="a" style="left:348px;top:891.5px;font-size:12px;line-height:15px;color:#333;white-space:nowrap"><span style="letter-spacing:-0.285px"><b>ИТОГО</b></span></div>
<div class="a" style="left:696px;top:891.5px;width:38px;text-align:center;font-size:12px;line-height:15px;color:#333">100</div>
<div class="a" style="left:734px;top:891.5px;width:56px;text-align:center;font-size:12px;line-height:15px;color:#333">X</div>
<div class="a" style="left:790px;top:891.5px;width:56px;text-align:center;font-size:12px;line-height:15px;color:#333">X</div>
<div class="a" style="left:846px;top:888px;width:98px;height:20px;background:#c3dcc3"></div>
<div class="a" style="left:846px;top:891.5px;width:94px;text-align:right;font-size:12px;font-weight:bold;line-height:15px;color:#222">6 124,86</div>
<div class="a" style="left:944px;top:888px;width:98px;height:20px;background:#c3dcc3"></div>
<div class="a" style="left:944px;top:891.5px;width:95px;text-align:right;font-size:12px;line-height:15px;color:#333">-</div>
<div class="a" style="left:348px;top:911.5px;font-size:12px;line-height:15px;color:#333;white-space:nowrap"><span style="letter-spacing:0.177px">Справочно: начисленные и невыплаченные пособия</span></div>
<div class="a" style="left:696px;top:911.5px;width:38px;text-align:center;font-size:12px;line-height:15px;color:#333">110</div>
<div class="a" style="left:734px;top:911.5px;width:56px;text-align:center;font-size:12px;line-height:15px;color:#333">X</div>
<div class="a" style="left:790px;top:911.5px;width:56px;text-align:center;font-size:12px;line-height:15px;color:#333">X</div>
<div class="a" style="left:846px;top:908px;width:98px;height:20px;background:#ffffc8"></div>
<div class="a" style="left:846px;top:911.5px;width:95px;text-align:right;font-size:12px;line-height:15px;color:#333">-</div>
<div class="a" style="left:944px;top:908px;width:98px;height:20px;background:#ffffc8"></div>
<div class="a" style="left:944px;top:911.5px;width:95px;text-align:right;font-size:12px;line-height:15px;color:#333">-</div>
<div class="a" style="left:342px;top:322.0px;width:354px;text-align:center;font-size:11px;line-height:14px;color:#333;white-space:nowrap"><span style="letter-spacing:-0.006px">Наименование показателя</span></div>
<div class="a" style="left:696px;top:308.0px;width:38px;text-align:center;font-size:11px;line-height:14px;color:#333;white-space:nowrap"><span style="letter-spacing:0.019px">Код</span><br><span style="letter-spacing:0.313px">стро-</span><br><span style="letter-spacing:0.021px">ки</span></div>
<div class="a" style="left:734px;top:301.0px;width:56px;text-align:center;font-size:11px;line-height:14px;color:#333;white-space:nowrap"><span style="letter-spacing:-0.302px">Число</span><br><span style="letter-spacing:0.253px">случаев</span><br><span style="letter-spacing:0.104px">(получа-</span><br><span style="letter-spacing:0.083px">телей)</span></div>
<div class="a" style="left:790px;top:294.0px;width:56px;text-align:center;font-size:11px;line-height:14px;color:#333;white-space:nowrap"><span style="letter-spacing:0.057px">Количе-</span><br><span style="letter-spacing:0.625px">ство</span><br><span style="letter-spacing:-0.162px">дней,</span><br><span style="letter-spacing:0.238px">выплат,</span><br><span style="letter-spacing:-0.040px">пособий</span></div>
<div class="a" style="left:846px;top:283.0px;width:196px;text-align:center;font-size:11px;line-height:14px;color:#333;white-space:nowrap"><span style="letter-spacing:-0.128px">Расходы</span></div>
<div class="a" style="left:846px;top:332.0px;width:98px;text-align:center;font-size:11px;line-height:14px;color:#333;white-space:nowrap"><span style="letter-spacing:0.282px">всего</span></div>
<div class="a" style="left:944px;top:304.0px;width:98px;text-align:center;font-size:11px;line-height:14px;color:#333;white-space:nowrap"><span style="letter-spacing:0.157px">в том числе за</span><br><span style="letter-spacing:0.305px">счет средств,</span><br><span style="letter-spacing:0.015px">финансируемых</span><br><span style="letter-spacing:-0.177px">из федерального</span><br><span style="letter-spacing:0.057px">бюджета</span></div>
<div class="a" style="left:342px;top:378.0px;width:354px;text-align:center;font-size:11px;line-height:14px;color:#333;white-space:nowrap"><span style="letter-spacing:0.663px">А</span></div>
<div class="a" style="left:696px;top:378.0px;width:38px;text-align:center;font-size:11px;line-height:14px;color:#333;white-space:nowrap"><span style="letter-spacing:-0.219px">Б</span></div>
<div class="a" style="left:734px;top:378.0px;width:56px;text-align:center;font-size:11px;line-height:14px;color:#333;white-space:nowrap"><span style="letter-spacing:-0.118px">1</span></div>
<div class="a" style="left:790px;top:378.0px;width:56px;text-align:center;font-size:11px;line-height:14px;color:#333;white-space:nowrap"><span style="letter-spacing:-0.118px">2</span></div>
<div class="a" style="left:846px;top:378.0px;width:98px;text-align:center;font-size:11px;line-height:14px;color:#333;white-space:nowrap"><span style="letter-spacing:-0.118px">3</span></div>
<div class="a" style="left:944px;top:378.0px;width:98px;text-align:center;font-size:11px;line-height:14px;color:#333;white-space:nowrap"><span style="letter-spacing:-0.118px">4</span></div>
<div class="ln" style="left:342px;top:280px;width:1px;height:649px"></div>
<div class="ln" style="left:696px;top:280px;width:1px;height:649px"></div>
<div class="ln" style="left:734px;top:280px;width:1px;height:649px"></div>
<div class="ln" style="left:790px;top:280px;width:1px;height:649px"></div>
<div class="ln" style="left:846px;top:280px;width:1px;height:649px"></div>
<div class="ln" style="left:944px;top:300px;width:1px;height:629px"></div>
<div class="ln" style="left:1042px;top:280px;width:1px;height:649px"></div>
<div class="ln" style="left:342px;top:280px;width:701px;height:1px"></div>
<div class="ln" style="left:342px;top:377px;width:701px;height:1px"></div>
<div class="ln" style="left:342px;top:393px;width:701px;height:1px"></div>
<div class="ln" style="left:342px;top:489px;width:701px;height:1px"></div>
<div class="ln" style="left:342px;top:509px;width:701px;height:1px"></div>
<div class="ln" style="left:342px;top:588px;width:701px;height:1px"></div>
<div class="ln" style="left:342px;top:608px;width:701px;height:1px"></div>
<div class="ln" style="left:342px;top:628px;width:701px;height:1px"></div>
<div class="ln" style="left:342px;top:648px;width:701px;height:1px"></div>
<div class="ln" style="left:342px;top:684px;width:701px;height:1px"></div>
<div class="ln" style="left:342px;top:704px;width:701px;height:1px"></div>
<div class="ln" style="left:342px;top:724px;width:701px;height:1px"></div>
<div class="ln" style="left:342px;top:760px;width:701px;height:1px"></div>
<div class="ln" style="left:342px;top:780px;width:701px;height:1px"></div>
<div class="ln" style="left:342px;top:816px;width:701px;height:1px"></div>
<div class="ln" style="left:342px;top:852px;width:701px;height:1px"></div>
<div class="ln" style="left:342px;top:888px;width:701px;height:1px"></div>
<div class="ln" style="left:342px;top:908px;width:701px;height:1px"></div>
<div class="ln" style="left:342px;top:928px;width:701px;height:1px"></div>
<div class="ln" style="left:846px;top:300px;width:197px;height:1px"></div>
</body></html>
